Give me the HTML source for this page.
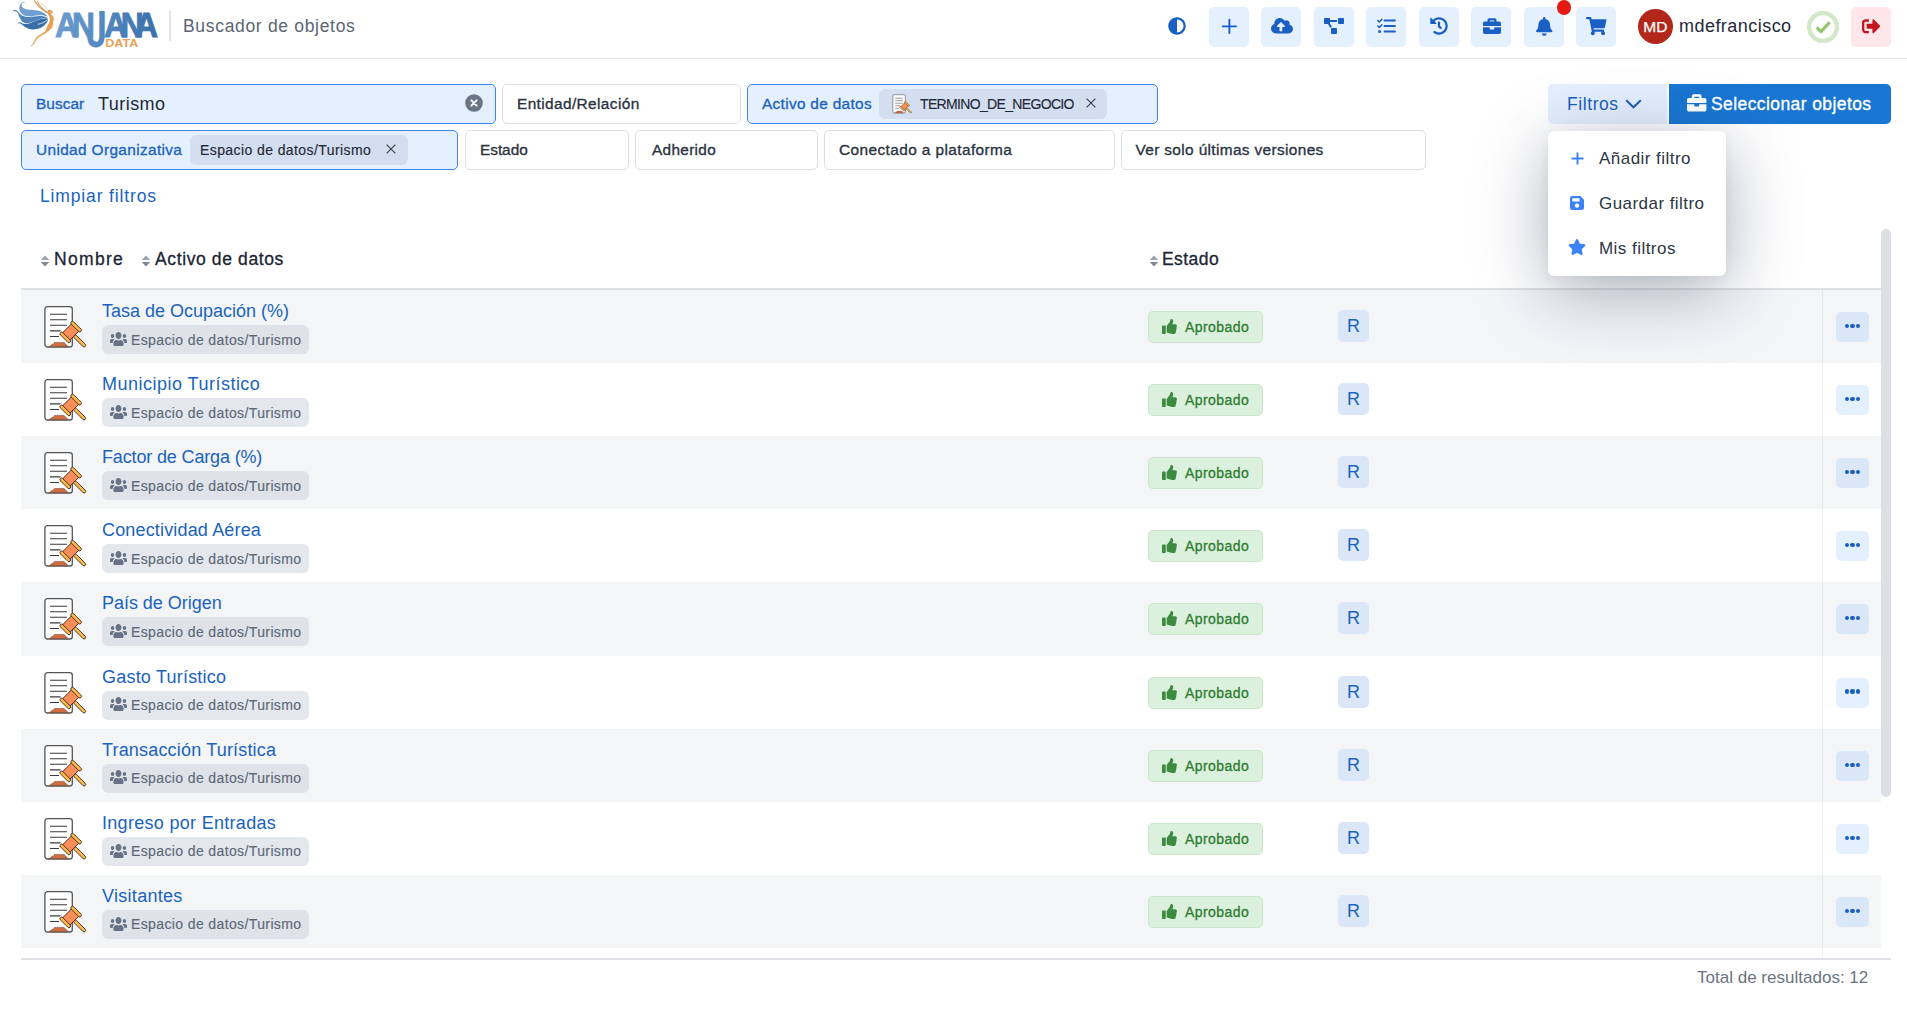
<!DOCTYPE html>
<html lang="es"><head><meta charset="utf-8"><title>Buscador de objetos</title>
<style>
*{box-sizing:border-box;margin:0;padding:0}
html,body{width:1907px;height:1020px;overflow:hidden;background:#fff}
body{position:relative;font-family:"Liberation Sans","DejaVu Sans",sans-serif;color:#1f2937;-webkit-font-smoothing:antialiased}
svg{display:block;overflow:visible}
.abs{position:absolute}
/* header */
.hdr{position:absolute;left:0;top:0;width:1907px;height:59px;border-bottom:1px solid #e3e6ec;background:#fff}
.logo{position:absolute;left:10px;top:0}
.hsep{position:absolute;left:169px;top:11px;width:2px;height:30px;background:#dfe3ea}
.htitle{position:absolute;left:183px;top:15px;font-size:17.5px;line-height:22px;color:#5b6572;letter-spacing:.62px;white-space:nowrap}
.hb{position:absolute;top:7px;width:40px;height:40px;border-radius:5px;background:#e5f0ff;display:flex;align-items:center;justify-content:center;padding-bottom:1.600px}
.hb.red{background:#ffe6e8}
.hb.plain{background:transparent}
.dot{position:absolute;left:1556.600px;top:-.2px;width:14.800px;height:14.800px;border-radius:50%;background:#e31b14}
.av{position:absolute;left:1638px;top:9px;width:35px;height:35px;border-radius:50%;background:#b3261a;color:#fff;font-size:15.5px;line-height:35px;text-align:center;letter-spacing:.3px;-webkit-text-stroke:.25px currentColor}
.user{position:absolute;left:1679px;top:13.700px;font-size:18px;line-height:24px;color:#1f2937;letter-spacing:.55px;white-space:nowrap}
/* filters */
.fb{position:absolute;height:40px;border:1px solid #dcdfe6;border-radius:5px;background:#fff;white-space:nowrap}
.fb.on{background:#e5f0ff;border:1px solid #3d85f5}
.fl{position:absolute;left:14px;top:0;line-height:38px;font-size:15.4px;color:#2a3240;letter-spacing:.6px;-webkit-text-stroke:.33px currentColor}
.fb.on .fl{color:#1c63bd}
.chip{position:absolute;top:4px;height:30px;border-radius:6px;background:#d3def0}
.chip span{position:absolute;top:0;line-height:30px;font-size:14px;color:#1f2937;-webkit-text-stroke:.15px currentColor}
.btn{position:absolute;top:84px;height:40px;font-size:17.5px;line-height:40px;white-space:nowrap}
.lf{position:absolute;left:40px;top:185px;font-size:17.5px;line-height:22px;color:#1a63bd;letter-spacing:.5px;white-space:nowrap}
/* table */
.thead{position:absolute;left:21px;top:230px;width:1860px;height:58px}
.thead .sort{position:absolute;top:25px}
.thead .sort{margin-left:-21px}
.th{position:absolute;top:17px;margin-left:-21px;font-size:17.5px;line-height:24px;color:#1b2433;white-space:nowrap;letter-spacing:.6px;-webkit-text-stroke:.3px currentColor}
.thline{position:absolute;left:21px;top:288px;width:1860px;height:2px;background:#dde1e6}
.row{position:absolute;left:21px;width:1860px;height:73px;background:#fff}
.row.odd{background:#f3f5f7}
.doc{position:absolute;left:22px;top:15px}
.ttl{position:absolute;left:81px;top:9px;font-size:18px;line-height:24px;color:#1a63bd;white-space:nowrap;letter-spacing:.02px}
.org{position:absolute;left:81px;top:35px;width:207px;height:29px;border-radius:6px;background:#e4e8ee}
.row.odd .org{background:#dfe3e9}
.org svg{position:absolute;left:8.100px;top:5.800px}
.orgt{position:absolute;left:29px;top:.5px;line-height:29px;font-size:14px;color:#5d6878;white-space:nowrap;letter-spacing:.38px;-webkit-text-stroke:.15px currentColor}
.ok{position:absolute;left:1127px;top:21px;width:115px;height:32px;border-radius:5px;background:#dcf1dd;border:1px solid #c9e6cb}
.ok svg{position:absolute;left:12px;top:7px}
.okt{position:absolute;left:36px;top:0;line-height:30px;font-size:14px;color:#2f7d33;white-space:nowrap;letter-spacing:.44px;-webkit-text-stroke:.32px currentColor}
.rb{position:absolute;left:1317px;top:20px;width:31px;height:32px;border-radius:5px;background:#dbe7f9;color:#1a63bd;font-size:18px;line-height:32px;text-align:center}
.more{position:absolute;left:1815px;top:22px;width:33px;height:30px;border-radius:5px;background:rgba(30,120,255,.115)}
.more i{position:absolute;top:11.900px;width:4.100px;height:4.100px;border-radius:50%;background:#1a5fc0}
.more i:nth-child(1){left:8.700px}.more i:nth-child(2){left:14.450px}.more i:nth-child(3){left:20.100px}
.vline{position:absolute;left:1822px;top:290px;width:1px;height:668px;background:rgba(0,0,0,.055)}
.scroll{position:absolute;left:1881px;top:229px;width:10px;height:568px;border-radius:5px;background:#dcdfe5}
.botline{position:absolute;left:21px;top:958px;width:1870px;height:2px;background:#dde1e6}
.total{position:absolute;left:1697px;top:965.700px;font-size:17px;line-height:24px;color:#6b7380;white-space:nowrap;letter-spacing:.45px}
/* menu */
.menu{position:absolute;left:1548px;top:131px;width:178px;height:145px;border-radius:6px;background:#fff;box-shadow:0 15px 70px rgba(30,40,70,.37),0 3px 12px rgba(30,40,70,.05)}
.mi{position:absolute;left:51px;font-size:17px;line-height:24px;color:#2c3543;white-space:nowrap;letter-spacing:.4px}
.menu svg{position:absolute}

#htitle{letter-spacing:0.68px}
#user{letter-spacing:0.46px}
#f-buscar{letter-spacing:0.06px}
#f-turismo{letter-spacing:0.45px}
#f-ent{letter-spacing:0.39px}
#f-act{letter-spacing:0.31px}
#c-term{letter-spacing:-0.66px}
#b-fil{letter-spacing:0.58px}
#b-sel{letter-spacing:0.41px}
#f-uo{letter-spacing:0.36px}
#c-esp{letter-spacing:0.41px}
#f-est{letter-spacing:-0.04px}
#f-adh{letter-spacing:0.31px}
#f-con{letter-spacing:0.41px}
#f-ver{letter-spacing:0.36px}
#lf{letter-spacing:0.86px}
#th1{letter-spacing:1.32px}
#th2{letter-spacing:0.62px}
#th3{letter-spacing:0.44px}
#total{letter-spacing:0.01px}
#m1{letter-spacing:0.46px}
#m2{letter-spacing:0.45px}
#m3{letter-spacing:0.46px}
#t0{letter-spacing:0.00px}
#t1{letter-spacing:0.49px}
#t2{letter-spacing:-0.15px}
#t3{letter-spacing:0.16px}
#t4{letter-spacing:-0.03px}
#t5{letter-spacing:0.21px}
#t6{letter-spacing:0.18px}
#t7{letter-spacing:0.30px}
#t8{letter-spacing:0.29px}
#okt{letter-spacing:0.44px}
</style></head>
<body>
<svg width="0" height="0" style="position:absolute">
<defs>
<linearGradient id="lg" x1="0" x2="1" y1="0" y2="0"><stop offset="0" stop-color="#6fa2d2"/><stop offset="1" stop-color="#386ea8"/></linearGradient>
<g id="i-sort"><path d="M5 0.5 L9.3 5 H0.7Z" fill="#9aa3b2"/><path d="M5 11.5 L9.3 7 H0.7Z" fill="#7f8898"/></g>
<g id="i-users"><path d="M96 224c35.300 0 64-28.700 64-64s-28.700-64-64-64-64 28.700-64 64 28.700 64 64 64zm448 0c35.300 0 64-28.700 64-64s-28.700-64-64-64-64 28.700-64 64 28.700 64 64 64zm32 32h-64c-17.600 0-33.500 7.100-45.100 18.600 40.300 22.100 68.900 62 75.100 109.400h66c17.700 0 32-14.300 32-32v-32c0-35.300-28.700-64-64-64zm-256 0c61.900 0 112-50.100 112-112S381.900 32 320 32 208 82.100 208 144s50.100 112 112 112zm76.800 32h-8.300c-20.800 10-43.900 16-68.500 16s-47.600-6-68.500-16h-8.300C179.600 288 128 339.600 128 403.200V432c0 26.500 21.500 48 48 48h288c26.500 0 48-21.500 48-48v-28.800c0-63.600-51.600-115.200-115.200-115.200zm-223.700-13.400C161.500 263.100 145.600 256 128 256H64c-35.300 0-64 28.700-64 64v32c0 17.700 14.300 32 32 32h65.900c6.300-47.400 34.900-87.300 75.200-109.400z" fill="#677385"/></g>
<g id="i-thumb"><path d="M104 224H24c-13.255 0-24 10.745-24 24v240c0 13.255 10.745 24 24 24h80c13.255 0 24-10.745 24-24V248c0-13.255-10.745-24-24-24zM384 81.452c0 42.416-25.970 66.208-33.277 94.548h101.723c33.397 0 59.397 27.746 59.553 58.098.084 17.938-7.546 37.249-19.439 49.197l-.11.11c9.836 23.337 8.237 56.037-9.308 79.469 8.681 25.895-.069 57.704-16.382 74.757 4.298 17.598 2.244 32.575-6.148 44.632C440.202 511.587 389.616 512 346.839 512l-2.845-.001c-48.287-.017-87.806-17.598-119.560-31.725-15.957-7.099-36.821-15.887-52.651-16.178-6.540-.12-11.783-5.457-11.783-11.998v-213.770c0-3.200 1.282-6.271 3.558-8.521 39.614-39.144 56.648-80.587 89.117-113.111 14.804-14.832 20.188-37.236 25.393-58.902C282.515 39.293 291.817 0 312 0c24 0 72 8 72 81.452z" fill="#3d8b41"/></g>
<g id="i-doc">
 <rect x="1.900" y="1.600" width="27.400" height="40.400" rx="2.600" fill="#fff" stroke="#555" stroke-width="1.300"/>
 <path d="M7 9.300H24M7 14.700H24M7 20.300H24M7 25.900H17.500M7 31.500H16" stroke="#3a3a3a" stroke-width="1.100" fill="none"/>
 <path d="M6.400 41.600 L9.200 39.300 H10.300 L11.500 37.400 H21.200 L22.400 39.300 H23 L25 41.600Z" fill="#cf6d40" stroke="#6a3a25" stroke-width=".5"/>
 <g transform="translate(27.700 27) rotate(45)">
  <rect x="5" y="-1.600" width="15.500" height="3.200" rx="1.600" fill="#ffb84a" stroke="#2a2018" stroke-width=".8"/>
  <rect x="-5.200" y="-7" width="10.400" height="14" fill="#ff8d58" stroke="#2a2018" stroke-width=".8"/>
  <rect x="-6.800" y="-9.300" width="13.600" height="3.300" rx="1.600" fill="#ffb84a" stroke="#2a2018" stroke-width=".8"/>
  <rect x="-6.800" y="6" width="13.600" height="3.300" rx="1.600" fill="#ffb84a" stroke="#2a2018" stroke-width=".8"/>
 </g>
</g>
</defs>
</svg>
<div class="hdr">
<svg class="logo" width="160" height="56" viewBox="0 0 160 56">
 <defs><linearGradient id="lgu" gradientUnits="userSpaceOnUse" x1="46" y1="0" x2="148" y2="0"><stop offset="0" stop-color="#6c9ed0"/><stop offset=".45" stop-color="#5488c0"/><stop offset="1" stop-color="#396fab"/></linearGradient></defs>
 <path d="M13.800 2 C11.500 2.200 9.600 4.500 9.300 7.500 C9 11.500 11.500 14.800 16 16 C20 16.900 24.500 15.600 29 15.300 C32.500 15.100 35.500 15.800 37.800 16.800 C36 13.500 32 11.300 27 10.600 C22 9.900 17.500 10.200 14.200 8.600 C11.800 7.400 10.800 4.800 12.200 3.200 C12.800 2.600 13.800 2.600 15.200 3 C14.800 2.400 14.400 2.100 13.800 2 Z" fill="#6f9fd0"/>
 <path d="M3 10.300 C4.500 9.900 6 10 7 10.600 C8.500 12 9.500 14.500 12.500 15.800 C16 17.300 20 17.400 24 16.600 C28.500 15.800 33 15.900 37 17.400 L37.800 17.900 C33 17.700 29 19 25 20.800 C21 22.700 17.500 23.600 14.500 23 C11 21.500 9.500 17 8 13.500 C7 11.500 5.500 10.800 3 10.900 Z" fill="#4e83bc"/>
 <path d="M7.700 24.200 C8 22.800 9 22 10.200 22.300 C11.500 22.800 12.500 23.800 14.500 24 C18 24.300 21.500 22.600 25.500 20.800 C29.500 19 33.500 18.200 37.600 18.300 C37.900 19.500 37.900 20.500 37.600 21.400 C35.500 25 32 27.800 27 29 C22 30.200 18 29 14.500 26.500 C12.500 25 11 23.400 9.800 23.200 C8.800 23 8.200 23.500 7.700 24.200 Z" fill="#386fa9"/>
 <path d="M27.800 24.300 C31.500 23.600 35 22 37.600 19.900" fill="none" stroke="#fff" stroke-width=".7"/>
 <path d="M39 13.300 C40.800 14 42.600 15.300 43.500 17.200 C44.300 19 43.800 20.600 42.900 22 C43.300 23.300 43.300 24.600 42.800 26 C41.800 28.600 39 30.800 36 33 C33.500 34.800 30.500 36 28.500 37.600 C26.500 39.600 25.500 42 23.800 44 C22.800 45.200 21.500 46.300 20.200 46.900 C20.800 45.600 22.300 44.400 23.300 42.800 C24.800 40.400 25.500 38 27.500 36.300 C30 34.300 33.500 33.200 35.300 31.200 C36.300 29.800 36.200 28.300 37 26.500 C37.800 24.500 39.300 23 39.800 20.800 C40.200 18.800 39.500 17 38.800 15.500 C38.500 14.700 38.600 13.900 39 13.300 Z" fill="#e9a055"/>
 <ellipse cx="40.300" cy="11.700" rx="2.700" ry="1.800" transform="rotate(20 40.300 11.700)" fill="#e9a055"/>
 <path d="M39.500 14 C36 12 31 9 28 5.500 C26 3.200 25 1.800 24.600 .800" fill="none" stroke="#e9a055" stroke-width="1.300" stroke-linecap="round"/>
 <path d="M40 14.600 C36.500 12 32 8.500 29.500 5 C28.300 3.300 27.500 2.200 27.100 1.200" fill="none" stroke="#b9793c" stroke-width=".8" stroke-linecap="round"/>
 <path d="M37.300 10 C35.800 8 35.300 5.800 33.500 4.800 C32.500 4.300 31.500 4.300 30.800 3.900" fill="none" stroke="#f1c391" stroke-width=".7" stroke-linecap="round"/>
 <clipPath id="jclip"><path d="M89.300 0H160V56H0V18.200H89.300Z"/></clipPath>
 <g font-family="Liberation Sans, sans-serif" font-weight="bold" fill="url(#lgu)" stroke="url(#lgu)" stroke-width="1" font-size="35.900">
  <text x="45.100" y="36.800" textLength="23.300" lengthAdjust="spacingAndGlyphs">A</text>
  <text x="62" y="36.800" textLength="22.800" lengthAdjust="spacingAndGlyphs">N</text>
  <text x="76.550" y="47.400" font-size="52.400" stroke="none" textLength="20.600" lengthAdjust="spacingAndGlyphs" clip-path="url(#jclip)">J</text>
  <text x="94.100" y="36.800" textLength="23.300" lengthAdjust="spacingAndGlyphs">A</text>
  <text x="110.700" y="36.800" textLength="22.800" lengthAdjust="spacingAndGlyphs">N</text>
  <text x="124.700" y="36.800" textLength="23.300" lengthAdjust="spacingAndGlyphs">A</text>
 </g>
 <text x="95.300" y="47.300" font-family="Liberation Sans, sans-serif" font-weight="bold" font-size="11.200" fill="#e9a055" textLength="32.900" lengthAdjust="spacingAndGlyphs">DATA</text>
</svg>
<div class="hsep"></div>
<div class="htitle" id="htitle">Buscador de objetos</div>

<div class="hb plain" style="left:1157px"><svg width="18" height="18" viewBox="0 0 512 512"><path fill="#1a5fc4" d="M8 256c0 136.966 111.033 248 248 248s248-111.034 248-248S392.966 8 256 8 8 119.033 8 256zm248 184V72c101.705 0 184 82.311 184 184 0 101.705-82.311 184-184 184z"/></svg></div>
<div class="hb" style="left:1209px"><svg width="14.800" height="14.800" viewBox="0 0 16 16"><path d="M8 .8V15.200M.8 8H15.200" stroke="#1a5fc4" stroke-width="2.050" stroke-linecap="round"/></svg></div>
<div class="hb" style="left:1261px"><svg style="margin-left:2px" width="22" height="17.600" viewBox="0 0 640 512"><path fill="#1a5fc4" d="M537.600 226.600c4.100-10.700 6.400-22.400 6.400-34.600 0-53-43-96-96-96-19.700 0-38.100 6-53.300 16.200C367 64.200 315.300 32 256 32c-88.400 0-160 71.600-160 160 0 2.700.1 5.400.2 8.100C40.200 219.800 0 273.200 0 336c0 79.500 64.500 144 144 144h368c70.700 0 128-57.300 128-128 0-61.900-44-113.600-102.400-125.400zM393.400 288H328v112c0 8.800-7.200 16-16 16h-48c-8.800 0-16-7.200-16-16V288h-65.400c-14.300 0-21.400-17.200-11.300-27.300l105.400-105.400c6.200-6.200 16.400-6.200 22.600 0l105.400 105.400c10.100 10.100 2.900 27.300-11.300 27.300z"/></svg></div>
<div class="hb" style="left:1314px"><svg width="20" height="16" viewBox="0 0 640 512"><path fill="#1a5fc4" d="M384 320H256c-17.670 0-32 14.330-32 32v128c0 17.670 14.330 32 32 32h128c17.670 0 32-14.330 32-32V352c0-17.670-14.330-32-32-32zM192 32c0-17.670-14.330-32-32-32H32C14.330 0 0 14.330 0 32v128c0 17.670 14.330 32 32 32h95.720l73.160 128.040C211.980 300.980 232.400 288 256 288h.280L192 175.510V128h224V64H192V32zM608 0H480c-17.670 0-32 14.330-32 32v128c0 17.670 14.330 32 32 32h128c17.670 0 32-14.330 32-32V32c0-17.670-14.330-32-32-32z"/></svg></div>
<div class="hb" style="left:1366px"><svg width="19" height="16" viewBox="0 0 19 16"><g fill="none" stroke="#1a5fc4" stroke-width="1.800" stroke-linecap="round" stroke-linejoin="round"><path d="M7.500 2.500H18M7.500 8H18M7.500 13.500H18"/><path d="M.9 2.600L2.300 4 4.900 1.200M.9 8.100L2.300 9.500 4.900 6.700" stroke-width="1.500"/></g><circle cx="2.600" cy="13.500" r="1.500" fill="#1a5fc4"/></svg></div>
<div class="hb" style="left:1419px"><svg width="18" height="18" viewBox="0 0 512 512"><path fill="#1a5fc4" d="M504 255.531c.253 136.640-111.180 248.372-247.820 248.468-59.015.042-113.223-20.530-155.822-54.911-11.077-8.940-11.905-25.541-1.839-35.607l11.267-11.267c8.609-8.609 22.353-9.551 31.891-1.984C173.062 425.135 212.781 440 256 440c101.705 0 184-82.311 184-184 0-101.705-82.311-184-184-184-48.814 0-93.149 18.969-126.068 49.932l50.754 50.754c10.080 10.080 2.941 27.314-11.313 27.314H24c-8.837 0-16-7.163-16-16V38.627c0-14.254 17.234-21.393 27.314-11.314l49.372 49.372C129.209 34.136 189.552 8 256 8c136.810 0 247.747 110.780 248 247.531zm-180.912 78.784l9.823-12.630c8.138-10.463 6.253-25.542-4.210-33.679L288 256.349V152c0-13.255-10.745-24-24-24h-16c-13.255 0-24 10.745-24 24v135.651l65.409 50.874c10.463 8.137 25.541 6.253 33.679-4.210z"/></svg></div>
<div class="hb" style="left:1471px"><svg style="margin-left:1px" width="18" height="18" viewBox="0 0 512 512"><path fill="#1a5fc4" d="M320 336c0 8.840-7.160 16-16 16h-96c-8.840 0-16-7.160-16-16v-48H0v144c0 25.600 22.400 48 48 48h416c25.600 0 48-22.400 48-48V288H320v48zm144-208h-80V80c0-25.600-22.400-48-48-48H176c-25.600 0-48 22.400-48 48v48H48c-25.600 0-48 22.400-48 48v80h512v-80c0-25.600-22.400-48-48-48zm-144 0H192V96h128v32z"/></svg></div>
<div class="hb" style="left:1524px"><svg style="margin-top:-.4px" width="16.500" height="18.800" viewBox="0 0 448 512"><path fill="#1a5fc4" d="M224 512c35.320 0 63.970-28.650 63.970-64H160.030c0 35.350 28.650 64 63.970 64zm215.390-149.710c-19.320-20.760-55.470-51.990-55.470-154.290 0-77.700-54.480-139.900-127.940-155.160V32c0-17.670-14.320-32-31.980-32s-31.980 14.330-31.980 32v20.840C118.560 68.100 64.080 130.300 64.080 208c0 102.300-36.150 133.530-55.470 154.290-6 6.450-8.660 14.160-8.610 21.710.11 16.400 12.980 32 32.100 32h383.800c19.120 0 32-15.600 32.100-32 .05-7.550-2.610-15.270-8.610-21.710z"/></svg></div>
<div class="dot"></div>
<div class="hb" style="left:1576px"><svg width="20.500" height="18.200" viewBox="0 0 576 512"><path fill="#1a5fc4" d="M528.120 301.319l47.273-208C578.806 78.301 567.391 64 551.990 64H159.208l-9.166-44.810C147.758 8.021 137.930 0 126.529 0H24C10.745 0 0 10.745 0 24v16c0 13.255 10.745 24 24 24h69.883l70.248 343.435C147.325 417.100 136 435.222 136 456c0 30.928 25.072 56 56 56s56-25.072 56-56c0-15.674-6.447-29.835-16.824-40h209.647C430.447 426.165 424 440.326 424 456c0 30.928 25.072 56 56 56s56-25.072 56-56c0-22.172-12.888-41.332-31.579-50.405l5.517-24.276c3.413-15.018-8.002-29.319-23.403-29.319H218.117l-6.545-32h293.145c11.206 0 20.920-7.754 23.403-18.681z"/></svg></div>
<div class="av">MD</div>
<div class="user" id="user">mdefrancisco</div>
<svg class="abs" style="left:1805.800px;top:9.800px" width="34" height="34" viewBox="0 0 34 34"><circle cx="17" cy="17" r="13.800" fill="none" stroke="#d2e8c8" stroke-width="4.200"/><circle cx="17" cy="17" r="15.300" fill="none" stroke="#d2e8c8" stroke-width="1.800" stroke-dasharray="4.400 2.010"/><path d="M10.600 17.300L15 21.500 23.600 12.400" fill="none" stroke="#8fc46b" stroke-width="3.100"/></svg>
<div class="hb red" style="left:1851px"><svg style="margin-top:.6px" width="18.500" height="18.500" viewBox="0 0 512 512"><path fill="#c4161c" d="M497 273L329 441c-15 15-41 4.500-41-17v-96H152c-13.300 0-24-10.700-24-24v-96c0-13.300 10.700-24 24-24h136V88c0-21.400 25.900-32 41-17l168 168c9.300 9.400 9.300 24.600 0 34zM192 436v-40c0-6.600-5.400-12-12-12H96c-17.700 0-32-14.300-32-32V160c0-17.700 14.300-32 32-32h84c6.600 0 12-5.400 12-12V76c0-6.600-5.400-12-12-12H96c-53 0-96 43-96 96v192c0 53 43 96 96 96h84c6.600 0 12-5.400 12-12z"/></svg></div>
</div>
<div class="fb on" style="left:21px;top:84px;width:475px">
  <span class="fl" id="f-buscar">Buscar</span>
  <span class="abs" id="f-turismo" style="left:76px;top:1px;line-height:37px;font-size:18px;color:#1f2937;">Turismo</span>
  <svg class="abs" style="left:442.500px;top:8.500px" width="18" height="18" viewBox="0 0 19 19"><circle cx="9.500" cy="9.500" r="9.300" fill="#6b7585"/><path d="M6.700 6.700L12.300 12.300M12.300 6.700L6.700 12.300" stroke="#fff" stroke-width="2" stroke-linecap="round"/></svg>
</div>
<div class="fb" style="left:502px;top:84px;width:239px"><span class="fl" id="f-ent">Entidad/Relación</span></div>
<div class="fb on" style="left:747px;top:84px;width:411px">
  <span class="fl" id="f-act">Activo de datos</span>
  <span class="chip" style="left:131px;width:228px">
    <svg class="abs" style="left:13px;top:5px" width="20" height="20" viewBox="0 0 44 44"><use href="#i-doc"/></svg>
    <span id="c-term" style="left:41px;">TERMINO_DE_NEGOCIO</span>
    <svg class="abs" style="left:207px;top:9.300px" width="10" height="10" viewBox="0 0 10 10"><path d="M.6.600L9.400 9.400M9.400.600L.6 9.400" stroke="#3b4452" stroke-width="1.200"/></svg>
  </span>
</div>
<div class="btn" style="left:1548px;width:119px;background:#e4efff;border-radius:5px 0 0 5px;color:#1c5fb8">
  <span class="abs" id="b-fil" style="left:19px;top:0;">Filtros</span>
  <svg class="abs" style="left:77px;top:15px" width="17" height="10" viewBox="0 0 17 10"><path d="M1.200 1.200L8.500 8.300 15.800 1.200" fill="none" stroke="#1c5fb8" stroke-width="2"/></svg>
</div>
<div class="btn" style="left:1669px;width:222px;background:#1976d2;border-radius:0 5px 5px 0;color:#fff">
  <svg class="abs" style="left:17.800px;top:9px" width="19.400" height="19.800" viewBox="0 0 512 512" preserveAspectRatio="none"><path fill="#fff" d="M320 336c0 8.840-7.160 16-16 16h-96c-8.840 0-16-7.160-16-16v-48H0v144c0 25.600 22.400 48 48 48h416c25.600 0 48-22.400 48-48V288H320v48zm144-208h-80V80c0-25.600-22.400-48-48-48H176c-25.600 0-48 22.400-48 48v48H48c-25.600 0-48 22.400-48 48v80h512v-80c0-25.600-22.400-48-48-48zm-144 0H192V96h128v32z"/></svg>
  <span class="abs" id="b-sel" style="left:42px;top:0;-webkit-text-stroke:.35px currentColor">Seleccionar objetos</span>
</div>

<div class="fb on" style="left:21px;top:130px;width:437px">
  <span class="fl" id="f-uo">Unidad Organizativa</span>
  <span class="chip" style="left:168px;width:218px">
    <span id="c-esp" style="left:10px;">Espacio de datos/Turismo</span>
    <svg class="abs" style="left:196px;top:9.300px" width="10" height="10" viewBox="0 0 10 10"><path d="M.6.600L9.400 9.400M9.400.600L.6 9.400" stroke="#3b4452" stroke-width="1.200"/></svg>
  </span>
</div>
<div class="fb" style="left:465px;top:130px;width:164px"><span class="fl" id="f-est">Estado</span></div>
<div class="fb" style="left:635px;top:130px;width:183px"><span class="fl" id="f-adh" style="left:16px">Adherido</span></div>
<div class="fb" style="left:824px;top:130px;width:291px"><span class="fl" id="f-con">Conectado a plataforma</span></div>
<div class="fb" style="left:1121px;top:130px;width:305px"><span class="fl" id="f-ver" style="left:13.500px">Ver solo últimas versiones</span></div>
<div class="lf" id="lf">Limpiar filtros</div>
<div class="thead">
<svg class="sort" style="left:40px" width="10" height="12" viewBox="0 0 10 12"><use href="#i-sort"/></svg><span class="th" style="left:54px" id="th1">Nombre</span>
<svg class="sort" style="left:141px" width="10" height="12" viewBox="0 0 10 12"><use href="#i-sort"/></svg><span class="th" style="left:155px" id="th2">Activo de datos</span>
<svg class="sort" style="left:1149px" width="10" height="12" viewBox="0 0 10 12"><use href="#i-sort"/></svg><span class="th" style="left:1162px" id="th3">Estado</span>
</div>
<div class="thline"></div>
<div class="row odd" style="top:290.0px;height:73.11px">
  <svg class="doc" width="44" height="44" viewBox="0 0 44 44"><use href="#i-doc"/></svg>
  <a class="ttl" id="t0">Tasa de Ocupación (%)</a>
  <span class="org"><svg width="17" height="16" viewBox="0 0 640 512" preserveAspectRatio="none"><use href="#i-users"/></svg><span class="orgt">Espacio de datos/Turismo</span></span>
  <span class="ok"><svg width="17" height="15" viewBox="0 0 512 512"><use href="#i-thumb"/></svg><span class="okt">Aprobado</span></span>
  <span class="rb">R</span>
  <span class="more"><i></i><i></i><i></i></span>
</div>
<div class="row" style="top:363.11px;height:73.11px">
  <svg class="doc" width="44" height="44" viewBox="0 0 44 44"><use href="#i-doc"/></svg>
  <a class="ttl" id="t1">Municipio Turístico</a>
  <span class="org"><svg width="17" height="16" viewBox="0 0 640 512" preserveAspectRatio="none"><use href="#i-users"/></svg><span class="orgt">Espacio de datos/Turismo</span></span>
  <span class="ok"><svg width="17" height="15" viewBox="0 0 512 512"><use href="#i-thumb"/></svg><span class="okt">Aprobado</span></span>
  <span class="rb">R</span>
  <span class="more"><i></i><i></i><i></i></span>
</div>
<div class="row odd" style="top:436.22px;height:73.11px">
  <svg class="doc" width="44" height="44" viewBox="0 0 44 44"><use href="#i-doc"/></svg>
  <a class="ttl" id="t2">Factor de Carga (%)</a>
  <span class="org"><svg width="17" height="16" viewBox="0 0 640 512" preserveAspectRatio="none"><use href="#i-users"/></svg><span class="orgt">Espacio de datos/Turismo</span></span>
  <span class="ok"><svg width="17" height="15" viewBox="0 0 512 512"><use href="#i-thumb"/></svg><span class="okt">Aprobado</span></span>
  <span class="rb">R</span>
  <span class="more"><i></i><i></i><i></i></span>
</div>
<div class="row" style="top:509.33px;height:73.11px">
  <svg class="doc" width="44" height="44" viewBox="0 0 44 44"><use href="#i-doc"/></svg>
  <a class="ttl" id="t3">Conectividad Aérea</a>
  <span class="org"><svg width="17" height="16" viewBox="0 0 640 512" preserveAspectRatio="none"><use href="#i-users"/></svg><span class="orgt">Espacio de datos/Turismo</span></span>
  <span class="ok"><svg width="17" height="15" viewBox="0 0 512 512"><use href="#i-thumb"/></svg><span class="okt">Aprobado</span></span>
  <span class="rb">R</span>
  <span class="more"><i></i><i></i><i></i></span>
</div>
<div class="row odd" style="top:582.44px;height:73.11px">
  <svg class="doc" width="44" height="44" viewBox="0 0 44 44"><use href="#i-doc"/></svg>
  <a class="ttl" id="t4">País de Origen</a>
  <span class="org"><svg width="17" height="16" viewBox="0 0 640 512" preserveAspectRatio="none"><use href="#i-users"/></svg><span class="orgt">Espacio de datos/Turismo</span></span>
  <span class="ok"><svg width="17" height="15" viewBox="0 0 512 512"><use href="#i-thumb"/></svg><span class="okt">Aprobado</span></span>
  <span class="rb">R</span>
  <span class="more"><i></i><i></i><i></i></span>
</div>
<div class="row" style="top:655.55px;height:73.11px">
  <svg class="doc" width="44" height="44" viewBox="0 0 44 44"><use href="#i-doc"/></svg>
  <a class="ttl" id="t5">Gasto Turístico</a>
  <span class="org"><svg width="17" height="16" viewBox="0 0 640 512" preserveAspectRatio="none"><use href="#i-users"/></svg><span class="orgt">Espacio de datos/Turismo</span></span>
  <span class="ok"><svg width="17" height="15" viewBox="0 0 512 512"><use href="#i-thumb"/></svg><span class="okt">Aprobado</span></span>
  <span class="rb">R</span>
  <span class="more"><i></i><i></i><i></i></span>
</div>
<div class="row odd" style="top:728.66px;height:73.11px">
  <svg class="doc" width="44" height="44" viewBox="0 0 44 44"><use href="#i-doc"/></svg>
  <a class="ttl" id="t6">Transacción Turística</a>
  <span class="org"><svg width="17" height="16" viewBox="0 0 640 512" preserveAspectRatio="none"><use href="#i-users"/></svg><span class="orgt">Espacio de datos/Turismo</span></span>
  <span class="ok"><svg width="17" height="15" viewBox="0 0 512 512"><use href="#i-thumb"/></svg><span class="okt">Aprobado</span></span>
  <span class="rb">R</span>
  <span class="more"><i></i><i></i><i></i></span>
</div>
<div class="row" style="top:801.77px;height:73.11px">
  <svg class="doc" width="44" height="44" viewBox="0 0 44 44"><use href="#i-doc"/></svg>
  <a class="ttl" id="t7">Ingreso por Entradas</a>
  <span class="org"><svg width="17" height="16" viewBox="0 0 640 512" preserveAspectRatio="none"><use href="#i-users"/></svg><span class="orgt">Espacio de datos/Turismo</span></span>
  <span class="ok"><svg width="17" height="15" viewBox="0 0 512 512"><use href="#i-thumb"/></svg><span class="okt">Aprobado</span></span>
  <span class="rb">R</span>
  <span class="more"><i></i><i></i><i></i></span>
</div>
<div class="row odd" style="top:874.88px;height:73.11px">
  <svg class="doc" width="44" height="44" viewBox="0 0 44 44"><use href="#i-doc"/></svg>
  <a class="ttl" id="t8">Visitantes</a>
  <span class="org"><svg width="17" height="16" viewBox="0 0 640 512" preserveAspectRatio="none"><use href="#i-users"/></svg><span class="orgt">Espacio de datos/Turismo</span></span>
  <span class="ok"><svg width="17" height="15" viewBox="0 0 512 512"><use href="#i-thumb"/></svg><span class="okt">Aprobado</span></span>
  <span class="rb">R</span>
  <span class="more"><i></i><i></i><i></i></span>
</div>
<div class="vline"></div>
<div class="scroll"></div>
<div class="botline"></div>
<div class="total" id="total">Total de resultados: 12</div>
<div class="menu">
  <svg style="left:23px;top:21px" width="13" height="13" viewBox="0 0 13 13"><path d="M6.500 .500V12.500M.500 6.500H12.500" stroke="#3b82f6" stroke-width="1.900"/></svg>
  <span class="mi" id="m1" style="top:16px">Añadir filtro</span>
  <svg style="left:22px;top:65px" width="14" height="14" viewBox="0 0 14 14"><path d="M2.200 0H10.300L14 3.700V11.800A2.200 2.200 0 0 1 11.800 14H2.200A2.200 2.200 0 0 1 0 11.800V2.200A2.200 2.200 0 0 1 2.200 0Z" fill="#3b82f6"/><rect x="2.300" y="2.300" width="7.300" height="3.200" rx=".5" fill="#fff"/><circle cx="7" cy="9.600" r="2.200" fill="#fff"/></svg>
  <span class="mi" id="m2" style="top:61px">Guardar filtro</span>
  <svg style="left:20px;top:108px" width="18" height="16" viewBox="0 0 576 512"><path fill="#3b82f6" d="M259.300 17.800L194 150.200 47.900 171.500c-26.200 3.800-36.700 36.100-17.700 54.600l105.700 103-25 145.500c-4.500 26.300 23.200 46 46.400 33.700L288 439.600l130.700 68.700c23.200 12.200 50.900-7.400 46.400-33.700l-25-145.500 105.700-103c19-18.500 8.500-50.800-17.700-54.600L382 150.200 316.700 17.800c-11.700-23.600-45.600-23.900-57.400 0z"/></svg>
  <span class="mi" id="m3" style="top:106px">Mis filtros</span>
</div>
</body></html>
